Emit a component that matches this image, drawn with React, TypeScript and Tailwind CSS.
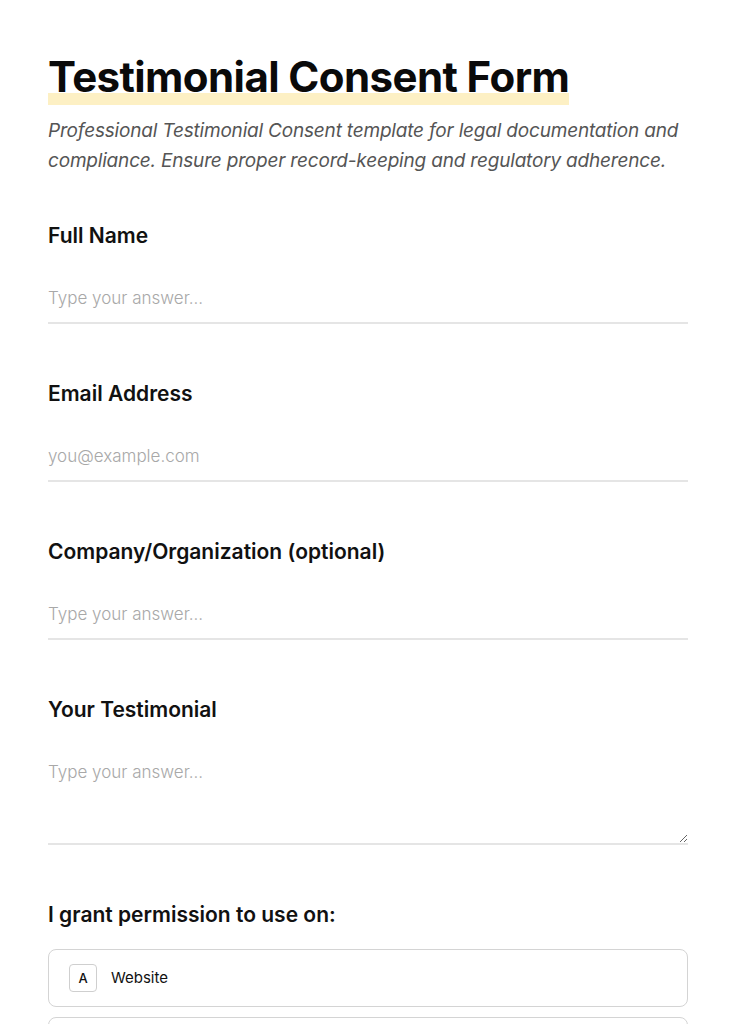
import { useState } from "react"

const font = { fontFamily: "Inter, 'Noto Sans', sans-serif" }

function TextField({ label, placeholder, type = "text" }: { label: string; placeholder: string; type?: string }) {
  return (
    <div className="flex flex-col">
      <label className="text-[21px] leading-[28px] font-semibold text-[#111]">{label}</label>
      <input
        type={type}
        placeholder={placeholder}
        className="mt-[23px] h-[51px] w-full border-b-2 border-[#e5e5e5] bg-transparent text-[17px] font-light text-[#111] placeholder:text-[#a8a8a8] outline-none"
      />
    </div>
  )
}

export default function App() {
  const [picked, setPicked] = useState<string[]>([])
  const toggle = (v: string) =>
    setPicked((p) => (p.includes(v) ? p.filter((x) => x !== v) : [...p, v]))

  const options = [
    { key: "A", label: "Website" },
    { key: "B", label: "Social Media" },
    { key: "C", label: "Marketing Materials" },
  ]

  return (
    <div className="min-h-screen bg-white" style={font}>
      <div className="px-12 pt-[52px] pb-16">
        <h1 className="text-[42px] leading-[1.2] font-bold text-[#0a0a0a] tracking-[-0.014em]">
          <span className="inline-block pb-[3px] bg-[linear-gradient(transparent_77%,#fdf0c4_77%)]">
            Testimonial Consent Form
          </span>
        </h1>
        <p className="mt-[11px] text-[19px] leading-[30px] italic text-[#555] tracking-[-0.01em]">
          Professional Testimonial Consent template for legal documentation and compliance. Ensure proper
          record-keeping and regulatory adherence.
        </p>

        <div className="mt-[46px] flex flex-col gap-[56px]">
          <TextField label="Full Name" placeholder="Type your answer..." />
          <TextField label="Email Address" placeholder="you@example.com" type="email" />
          <TextField label="Company/Organization (optional)" placeholder="Type your answer..." />

          <div className="flex flex-col">
            <label className="text-[21px] leading-[28px] font-semibold text-[#111]">Your Testimonial</label>
            <textarea
              placeholder="Type your answer..."
              className="mt-[23px] h-[98px] w-full border-b-2 border-[#e5e5e5] bg-transparent pt-[11px] text-[17px] leading-[28px] font-light text-[#111] placeholder:text-[#a8a8a8] outline-none"
            />
          </div>

          <div className="flex flex-col">
            <label className="text-[21px] leading-[28px] font-semibold text-[#111]">
              I grant permission to use on:
            </label>
            <div className="mt-[20px] flex flex-col gap-[10px]">
              {options.map((o) => (
                <button
                  key={o.key}
                  onClick={() => toggle(o.label)}
                  className={
                    "flex h-[58px] items-center gap-[14px] rounded-lg border px-5 text-left " +
                    (picked.includes(o.label) ? "border-[#111]" : "border-[#d4d4d4]")
                  }
                >
                  <span className="flex h-[28px] w-[28px] items-center justify-center rounded border border-[#cfcfcf] text-[13px] font-medium text-[#111]">
                    {o.key}
                  </span>
                  <span className="text-[15px] text-[#111]">{o.label}</span>
                </button>
              ))}
            </div>
          </div>
        </div>
      </div>
    </div>
  )
}
